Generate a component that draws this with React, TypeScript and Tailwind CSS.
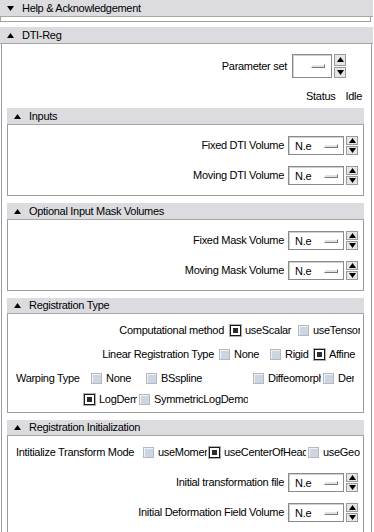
import clsx from "clsx";

function Tri({ up }: { up: boolean }) {
  return (
    <svg width="7" height="5" viewBox="0 0 7 5" className="shrink-0">
      {up ? <polygon points="0,5 7,5 3.5,0" fill="#000" /> : <polygon points="0,0 7,0 3.5,5" fill="#000" />}
    </svg>
  );
}

function Header({ title, up = true, className }: { title: string; up?: boolean; className?: string }) {
  return (
    <div className={clsx("flex items-center bg-[#dcdce0] border-b border-[#a6a6a6]", className)}>
      <span className="ml-[7px] mr-[8px] flex">
        <Tri up={up} />
      </span>
      <span className="leading-none">{title}</span>
    </div>
  );
}

function Choice({ text, big = false }: { text?: string; big?: boolean }) {
  return (
    <div
      className={clsx(
        "flex items-center bg-white border border-[#8a8a8a] shadow-[inset_1px_1px_0_#d0d0d0]",
        big ? "w-[40px] h-[24px] justify-end pr-[6px]" : "w-[56px] h-[19px] justify-between pl-[6px] pr-[5px]"
      )}
    >
      {text && <span className="leading-none pt-[1px]">{text}</span>}
      <span className="w-[14px] h-[4px] bg-[#e2e2e2] border-t border-l border-white border-b border-r border-b-[#777] border-r-[#777]" />
    </div>
  );
}

function Spin() {
  return (
    <div className="flex flex-col ml-[2px] w-[12px] self-stretch gap-[1px]">
      <div className="flex-1 border border-[#9a9a9a] bg-[#e6e6e6] flex items-center justify-center">
        <Tri up />
      </div>
      <div className="flex-1 border border-[#9a9a9a] bg-[#e6e6e6] flex items-center justify-center">
        <Tri up={false} />
      </div>
    </div>
  );
}

function VolRow({ label, text = "N.e" }: { label: string; text?: string }) {
  return (
    <div className="flex items-center justify-end pr-[5px]">
      <span className="mr-[4px]">{label}</span>
      <div className="flex">
        <Choice text={text} />
        <Spin />
      </div>
    </div>
  );
}

function Check({ on = false }: { on?: boolean }) {
  return on ? (
    <span className="w-[11px] h-[11px] border border-[#1a1a1a] bg-white flex items-center justify-center shrink-0 shadow-[0_0_0_1px_#b0b0b0]">
      <span className="w-[5px] h-[5px] bg-[#2e2e2e]" />
    </span>
  ) : (
    <span className="w-[11px] h-[11px] border border-[#b8b8b8] bg-[#ccd5e4] shrink-0 shadow-[inset_1px_1px_0_#eef1f6]" />
  );
}

function Opt({ label, on = false, className }: { label: string; on?: boolean; className: string }) {
  return (
    <div className={clsx("flex items-center shrink-0 pr-[2px]", className)}>
      <Check on={on} />
      <span className="ml-[4px] leading-none flex-1 min-w-0 overflow-hidden whitespace-nowrap">{label}</span>
    </div>
  );
}

function Group({
  title,
  children,
  className,
  head = "h-[17px]",
}: {
  title: string;
  children: React.ReactNode;
  className?: string;
  head?: string;
}) {
  return (
    <div className="ml-[5px] w-[357px]">
      <Header title={title} className={head} />
      <div className={clsx("border-l border-r border-b border-[#9c9c9c]", className)}>{children}</div>
    </div>
  );
}

export default function App() {
  return (
    <div className="w-[374px] h-[532px] overflow-hidden bg-white text-black text-[11px] tracking-[-0.3px] font-['Liberation_Sans',Arial,sans-serif]">
      <Header title="Help & Acknowledgement" up={false} className="h-[17px] w-[373px]" />
      <div className="h-[5px] w-[371px] border-l border-r border-b border-[#a0a0a0]" />

      <div className="mt-[5px] w-[373px]">
        <Header title="DTI-Reg" className="h-[17px]" />
        <div className="ml-[1px] w-[371px] h-[488px] border-l border-r border-[#9c9c9c]">
          <div className="flex items-center justify-end pr-[25px] pt-[10px]">
            <span className="mr-[5px]">Parameter set</span>
            <div className="flex">
              <Choice big />
              <Spin />
            </div>
          </div>
          <div className="flex items-center justify-end pr-[9px] h-[14px] mt-[11px]">
            <span>Status</span>
            <span className="ml-[10px]">Idle</span>
          </div>

          <div className="mt-[5px] flex flex-col gap-[7px]">
            <Group title="Inputs" className="h-[71px] flex flex-col pt-[11px] gap-[11px]">
              <VolRow label="Fixed DTI Volume" />
              <VolRow label="Moving DTI Volume" />
            </Group>

            <Group title="Optional Input Mask Volumes" className="h-[71px] flex flex-col pt-[11px] gap-[11px]">
              <VolRow label="Fixed Mask Volume" />
              <VolRow label="Moving Mask Volume" />
            </Group>

            <Group title="Registration Type" head="h-[16px]" className="h-[99px] flex flex-col pt-[9px]">
              <div className="flex items-center justify-end h-[14px] pr-[1px]">
                <span className="mr-[6px]">Computational method</span>
                <Opt label="useScalar" on className="w-[68px]" />
                <Opt label="useTensor" className="w-[64px]" />
              </div>
              <div className="flex items-center justify-end h-[14px] pr-[3px] mt-[10px]">
                <span className="mr-[5px]">Linear Registration Type</span>
                <Opt label="None" className="w-[51px]" />
                <Opt label="Rigid" className="w-[44px]" />
                <Opt label="Affine" on className="w-[46px]" />
              </div>
              <div className="flex items-center h-[14px] pl-[8px] mt-[10px]">
                <span className="w-[75px] shrink-0 whitespace-nowrap">Warping Type</span>
                <Opt label="None" className="w-[55px]" />
                <Opt label="BSspline" className="w-[107px]" />
                <Opt label="Diffeomorphic" className="w-[70px]" />
                <Opt label="Demons" className="w-[33px]" />
              </div>
              <div className="flex items-center h-[14px] pl-[76px] mt-[7px]">
                <Opt label="LogDemons" on className="w-[55px]" />
                <Opt label="SymmetricLogDemons" className="w-[111px]" />
              </div>
            </Group>

            <Group title="Registration Initialization" head="h-[16px]" className="h-[120px] flex flex-col pt-[9px]">
              <div className="flex items-center h-[14px] pl-[8px]">
                <span className="w-[127px] shrink-0 whitespace-nowrap">Intitialize Transform Mode</span>
                <Opt label="useMomentsAlign" className="w-[66px]" />
                <Opt label="useCenterOfHeadAlign" on className="w-[99px]" />
                <Opt label="useGeometryAlign" className="w-[54px]" />
              </div>
              <div className="mt-[14px]">
                <VolRow label="Initial transformation file" />
              </div>
              <div className="mt-[11px]">
                <VolRow label="Initial Deformation Field Volume" />
              </div>
            </Group>
          </div>
        </div>
      </div>
    </div>
  );
}
